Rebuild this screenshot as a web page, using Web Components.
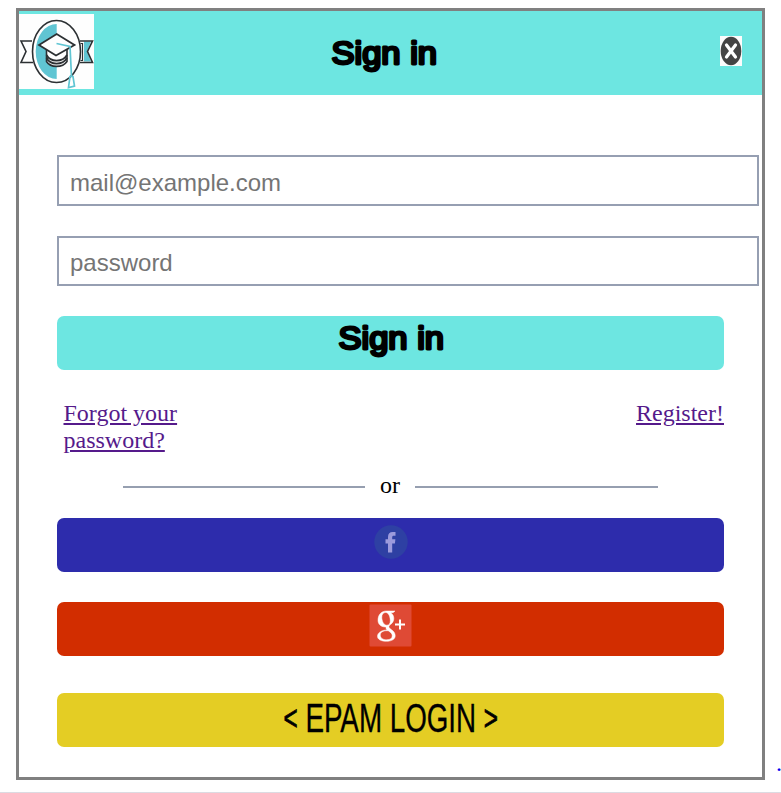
<!DOCTYPE html>
<html lang="en">
<head>
<meta charset="utf-8">
<title>Sign in</title>
<style>
html,body{margin:0;background:#fff}
body{height:793px;overflow:hidden;font:24px/27px "Liberation Serif",serif;color:#000}
</style>
</head>
<body>
<login-page></login-page>
<script>
const define = (name, html) => {
  const t = document.createElement('template');
  t.innerHTML = html;
  customElements.define(name, class extends HTMLElement {
    constructor() {
      super();
      this.attachShadow({mode: 'open'}).append(t.content.cloneNode(true));
    }
  });
};

define('academy-logo', `<style>:host{display:block;width:75px;height:75px}svg{display:block}</style>
<svg width="75" height="75" viewBox="0 0 75 75" fill="none">
<path fill="#fefefe" d="M0 0h75v75H0z"/>
<path d="M37.700 10A21 27.500 0 0 0 37.700 65z" fill="#60c5d3"/>
<path d="M65 27.500h7l-4 10 4 10h-7z" fill="#60c5d3"/>
<g stroke="#2c3033" stroke-width="1.600">
<path d="M13 27H2l5 10.500L2 48.500h12M61 27h12.500l-5 10.500 5 11H61"/>
<ellipse cx="37.500" cy="37.500" rx="24" ry="31"/>
<path d="M61.500 29.500h2v17h-2" stroke-width="1.200"/>
<path d="M27.500 34v13.500c4 6.500 16 6.500 20.500 0V34" fill="#fefefe"/>
<path d="M27.500 41c4 7.500 16 7.500 20.500 0M27.500 44c4 7.500 16 7.500 20.500 0" stroke-width="1.800"/>
<path d="M20 31 37.700 20 55.500 31 37 41.500z" fill="#fefefe" stroke-width="1.800"/>
</g>
<path d="M37.500 29.500 51 32.500l1.500 30M49.500 73.500l1.500-11h3l1.500 9.500z" stroke="#60c5d3" stroke-width="1.700"/>
</svg>`);

define('sign-label', `<style>:host{display:block}svg{display:block;overflow:visible}text{font:32px "Liberation Sans",sans-serif;stroke:#000;stroke-width:2.800px;stroke-linejoin:round}</style>
<svg width="110" height="40"><text x="2.500" y="29" textLength="105.500" lengthAdjust="spacingAndGlyphs">Sign in</text></svg>`);

define('epam-label', `<style>:host{display:block}svg{display:block;overflow:visible}text{font:40px "Liberation Sans",sans-serif;stroke:#000;stroke-width:.3px}.b{font-size:35px;stroke-width:.8px}</style>
<svg width="220" height="48"><text x="2.500" y="34" textLength="214.500" lengthAdjust="spacingAndGlyphs"><tspan class="b">&lt;</tspan><tspan dy="2"> EPAM LOGIN </tspan><tspan class="b" dy="-2">&gt;</tspan></text></svg>`);

define('close-icon', `<style>:host{display:block}svg{display:block}</style>
<svg width="22" height="30" viewBox="0 0 22 30"><path fill="#fcfcfc" d="M0 0h22v30H0z"/><ellipse cx="11" cy="15" rx="10.300" ry="14.300" fill="#444"/><path d="m6.500 9 9 12m0-12-9 12" stroke="#fff" stroke-width="3.200" stroke-linecap="round"/></svg>`);

define('facebook-icon', `<style>:host{display:block}svg{display:block}</style>
<svg width="34" height="34" viewBox="0 0 34 34"><circle cx="17" cy="17" r="16.700" fill="#2e40a3"/><path d="M14 27.500V18.500H11.500V14.300H14v-2.300c0-3.400 1.700-5 4.700-5h2.800v3.800h-1.700c-1.300 0-1.600.5-1.600 1.700v1.800h3.200l-.5 4.200h-2.700v9z" fill="#9c9bdc"/></svg>`);

define('google-icon', `<style>:host{display:block}svg{display:block}</style>
<svg width="43" height="43" viewBox="0 0 43 43"><rect x=".5" y=".5" width="42" height="42" rx="1" fill="#df4a35"/>
<path fill="#fff" stroke="#fff" stroke-width=".5" fill-rule="evenodd" d="M17.500 7h8.500l-2 1.700h-2.200c2 1.500 3 3.400 3 5.800 0 2.700-1.200 4.300-3 5.800-1.500 1.200-1.900 1.700-1.900 2.500 0 1 .8 1.600 2 2.500 3 2.100 4.300 3.900 4.300 6.500 0 3.200-3.200 5.500-8.800 5.500-5 0-8.900-1.800-8.900-5 0-4 4.700-6.300 9.500-6.400-.8-.9-1.200-1.700-.9-3-4.700.5-8.100-2.400-8.100-6.600C9 11 12.100 7 17.500 7zm-.8 1.500c-2.500 0-3.900 1.900-3.900 4.700 0 3.800 2 8 5 8 2.300 0 3.500-1.700 3.500-4.300 0-3.800-1.600-8.400-4.600-8.400zM18 26.700c-4.300 0-6.700 1.700-6.700 4.500 0 2.700 2.400 4.600 6.300 4.600 3.800 0 5.600-1.600 5.600-4.100 0-2-1.200-3.100-4-5z"/><path d="M26 20.500h10M31 15.500v10" stroke="#fff" stroke-width="2"/></svg>`);

define('dialog-header', `<style>:host{display:grid;grid-template-columns:1fr auto 1fr;height:84px;background:#6de6e1}academy-logo{margin-top:3px}sign-label{margin:24px 0 0 -14px}close-icon{justify-self:end;margin:25px 20px 0 0}</style>
<academy-logo></academy-logo><sign-label></sign-label><close-icon></close-icon>`);

class TextField extends HTMLElement {
  constructor() {
    super();
    this.attachShadow({mode: 'open'}).innerHTML = `<style>:host{display:block;height:50px;width:702px}input{display:block;box-sizing:border-box;width:100%;height:100%;margin:0;border:2px solid #969fb2;border-radius:0;padding:4px 11px 0;background:#fff;font:24px "Liberation Sans",sans-serif;outline:0}input::placeholder{color:#757575;opacity:1}</style><input>`;
    const input = this.shadowRoot.querySelector('input');
    input.type = this.getAttribute('type') || 'text';
    input.placeholder = this.getAttribute('placeholder') || '';
  }
}
customElements.define('text-field', TextField);

define('wide-button', `<style>:host{display:flex;justify-content:center;align-items:flex-start;box-sizing:border-box;height:54px;border-radius:7px;background:var(--button-color);cursor:pointer}</style><slot></slot>`);

define('or-divider', `<style>:host{display:flex;align-items:center;justify-content:center;gap:15px}i{width:242px;height:2px;margin-top:3px;background:#969fb0}i:last-child{width:243px}</style><i></i><slot></slot><i></i>`);

define('help-links', `<style>:host{display:flex;justify-content:space-between;padding-left:6.500px}a{color:#551a8b;text-decoration:underline}.forgot{width:130px}</style><a class="forgot" href="#">Forgot your password?</a><a href="#">Register!</a>`);

define('login-page', `<style>
:host{display:flex;height:793px;box-sizing:border-box;padding:8px 0 0 16px;border-bottom:1px solid #dcdbe2;overflow:hidden}
main{box-sizing:border-box;flex:none;width:749px;height:772px;border:3px solid gray}
form{display:flex;flex-direction:column;padding:60px 38px 0}
text-field:first-child{height:51px}
text-field+text-field{margin-top:30px}
.sign{--button-color:#6de6e1;margin-top:30px}
.sign sign-label{margin-top:4px}
help-links{margin-top:30px}
or-divider{margin-top:18px}
.fb{--button-color:#2d2cac;padding-top:7px;margin-top:19px}
.gp{--button-color:#d22d00;padding-top:2px;margin-top:30px}
.epam{--button-color:#e4cd24;padding-top:3px;margin-top:37px}
.stray{align-self:flex-end;margin:0 0 15px 11px;color:#00e}
</style>
<main><dialog-header></dialog-header><form>
<text-field type="email" placeholder="mail@example.com"></text-field>
<text-field type="password" placeholder="password"></text-field>
<wide-button class="sign"><sign-label></sign-label></wide-button>
<help-links></help-links><or-divider>or</or-divider>
<wide-button class="fb"><facebook-icon></facebook-icon></wide-button>
<wide-button class="gp"><google-icon></google-icon></wide-button>
<wide-button class="epam"><epam-label></epam-label></wide-button>
</form></main><span class="stray">.</span>`);
</script>
</body>
</html>
